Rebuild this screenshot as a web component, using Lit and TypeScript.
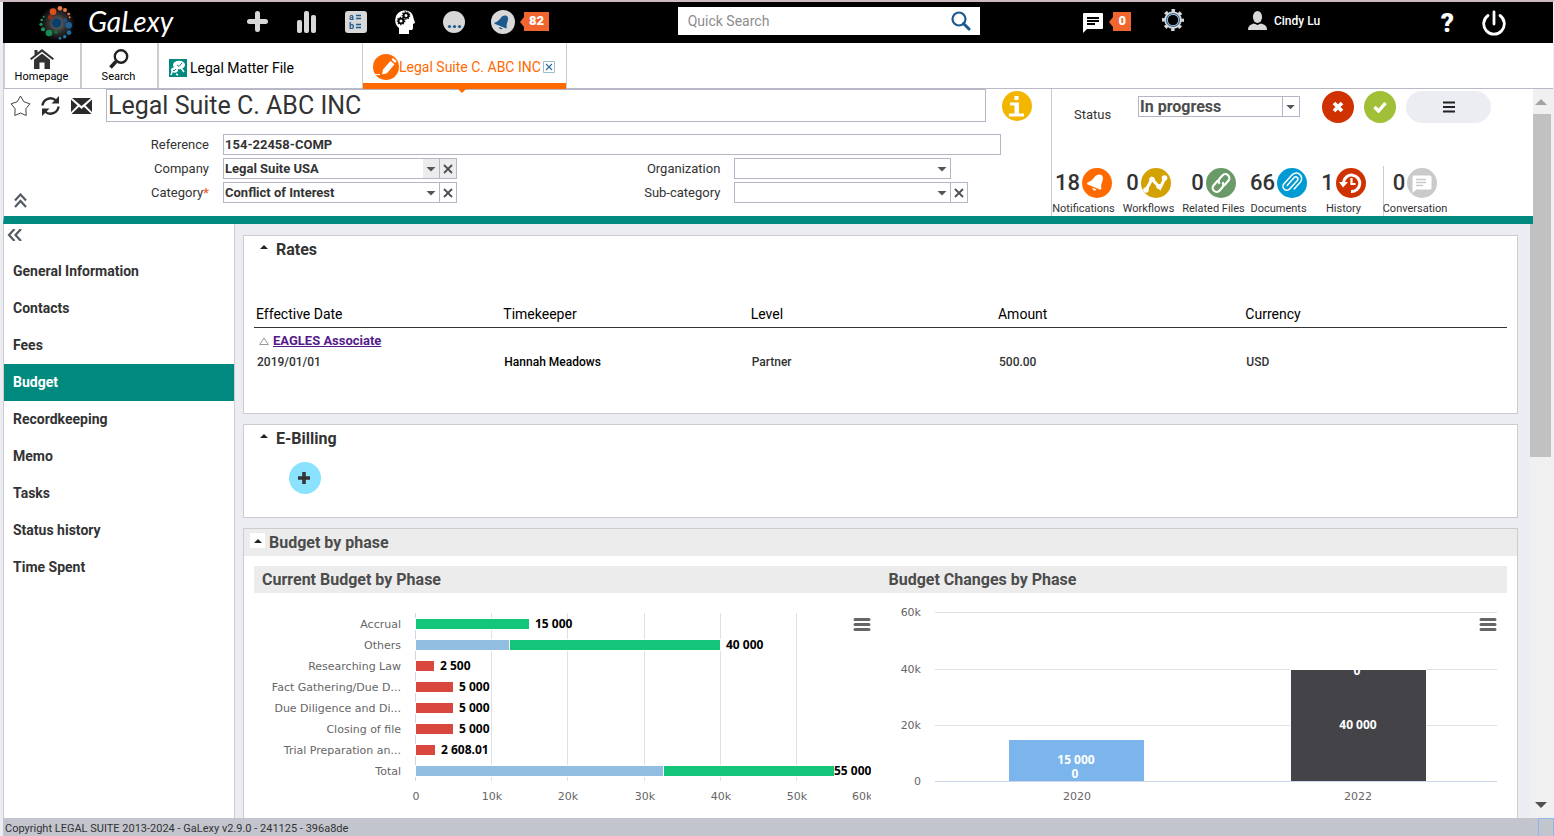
import { LitElement, html, css, svg, nothing } from "lit";
import { customElement, property } from "lit/decorators.js";
import { classMap } from "lit/directives/class-map.js";

const up = svg`<path d="M0 4 4 0l4 4z"/>`;

const SECTIONS = ["General Information", "Contacts", "Fees", "Budget", "Recordkeeping", "Memo", "Tasks", "Status history", "Time Spent"];

const bell = svg`<path d="M19.500 7c-2.500-1.200-5-.5-7 2-1.700 2.200-3.500 4.600-7 5.600-.8.600-.5 1.400.3 1.800l12.200 5c1 .3 1.500-.3 1.300-1.200-.6-3.400.6-5.200 1.300-7.600.8-2.600.3-4.600-1.100-5.600z"/><path d="M10.500 19.800a2.200 2.200 0 0 0 4 1.600z"/>`;

const COUNTERS = [
  { n: 18, label: "Notifications", color: "#ff6a00", icon: svg`<g fill="#fff">${bell}</g>` },
  { n: 0, label: "Workflows", color: "#d3a200", icon: svg`<g fill="#fff"><path d="M5 22 11 11l8 9 5-10" fill="none" stroke="#fff" stroke-width="3"/><circle cx="5" cy="22" r="2.800"/><circle cx="11" cy="11.500" r="2.800"/><circle cx="18" cy="18.500" r="2.600"/><circle cx="23.500" cy="10" r="2.800"/></g>` },
  { n: 0, label: "Related Files", color: "#6a9a67", icon: svg`<g fill="none" stroke="#fff" stroke-width="2.200" transform="rotate(-48 15 15)"><path d="M15 11H8.500a4 4 0 0 0 0 8h4a4 4 0 0 0 4-3.500"/><path d="M15 19h6.500a4 4 0 0 0 0-8h-4a4 4 0 0 0-4 3.500"/></g>` },
  { n: 66, label: "Documents", color: "#009bd2", icon: svg`<path d="M10 13h10.500a2 2 0 0 1 0 4.200H9a3.800 3.800 0 0 1 0-7.600h11.500a5.500 5.500 0 0 1 1 11H12" fill="none" stroke="#fff" stroke-width="1.500" stroke-linecap="round" transform="rotate(-48 15 15)"/>` },
  { n: 1, label: "History", color: "#cf3200", icon: svg`<g fill="none" stroke="#fff" stroke-width="3"><path d="M7.500 14a8.200 8.200 0 1 1 7.500 9.500"/><path d="M15.500 10v6h4" stroke-width="2.200"/></g><path d="M3 14h9l-5 5.500z" fill="#fff"/>` },
  { n: 0, label: "Conversation", color: "#cacaca", icon: svg`<path d="M7 7.500h16a1.500 1.500 0 0 1 1.500 1.500v11a1.500 1.500 0 0 1-1.500 1.500H9.500l-4 3.500V9A1.500 1.500 0 0 1 7 7.500z" fill="#fff"/><path d="M9 11.500h10M9 14.500h10M9 17.500h7" stroke="#cacaca" stroke-width="1.500"/>` },
];

const DOTS: [number, number, number, string][] = [
  [159, 35, 10, "#d9501e"], [180, 25, 7, "#ee7846"], [195, 30, 6, "#ee7846"], [206, 42, 4, "#ee7846"], [209, 52, 3, "#ee7846"],
  [151, 52, 7, "#96291b"], [170, 69, 14, "#07406f"], [195, 61, 6, "#1d558a"], [206, 76, 10, "#1d5f96"], [207, 98, 7, "#1d6b9e"],
  [194, 110, 5, "#2a7ab0"], [180, 115, 4, "#2a7ab0"], [168, 96, 6, "#14693f"], [147, 99, 10, "#178a4f"], [129, 88, 6, "#1d965a"],
  [123, 73, 5, "#1d965a"], [125, 60, 4, "#1d965a"], [131, 50, 3, "#1d965a"],
];

interface Phase { name: string; parts: [number, string][]; label: string }
const GREEN = "#13c579", BLUE = "#91bde0", RED = "#d9473f";
const PHASES: Phase[] = [
  { name: "Accrual", parts: [[15000, GREEN]], label: "15 000" },
  { name: "Others", parts: [[12400, BLUE], [27600, GREEN]], label: "40 000" },
  { name: "Researching Law", parts: [[2500, RED]], label: "2 500" },
  { name: "Fact Gathering/Due D...", parts: [[5000, RED]], label: "5 000" },
  { name: "Due Diligence and Di...", parts: [[5000, RED]], label: "5 000" },
  { name: "Closing of file", parts: [[5000, RED]], label: "5 000" },
  { name: "Trial Preparation an...", parts: [[2608.01, RED]], label: "2 608.01" },
  { name: "Total", parts: [[32600, BLUE], [22400, GREEN]], label: "55 000" },
];

@customElement("picker-field")
class PickerField extends LitElement {
  @property() value = "";
  @property() label = "";
  @property({ type: Boolean }) clearable = false;
  @property({ type: Boolean }) shaded = false;
  static styles = css`
    :host { display: flex; height: 21px; }
    .box { position: relative; flex: 0 0 217px; min-width: 0; }
    select { box-sizing: border-box; width: 100%; height: 21px; margin: 0; padding: 0 17px 0 1px; appearance: none; border: 1px solid #b4b5c6; border-radius: 0; background: #fff; color: #333; font: bold 13px/19px Roboto, sans-serif; opacity: 1; }
    .arrow { position: absolute; right: 1px; top: 1px; width: 16px; height: 19px; pointer-events: none; }
    button { box-sizing: border-box; width: 18px; height: 21px; margin-left: -1px; padding: 0; border: 1px solid #b4b5c6; background: #fff; display: grid; place-items: center; position: relative; }
    .shaded .arrow, button.shaded { background: #ececec; }
    svg { display: block; }
  `;
  render() {
    return html`<span class=${classMap({ box: true, shaded: this.shaded })}>
        <select aria-label=${this.label}><option>${this.value}</option></select>
        <svg class="arrow" viewBox="0 0 16 19"><path d="M3.500 8h9L8 12.500z" fill="#555"/></svg>
      </span>
      ${this.clearable ? html`<button class=${classMap({ shaded: this.shaded })} aria-label="Clear ${this.label}"><svg width="10" height="10" viewBox="0 0 10 10"><path d="M1 1l8 8M9 1 1 9" stroke="#4b4e55" stroke-width="1.800"/></svg></button>` : nothing}`;
  }
}

@customElement("phase-chart")
class PhaseChart extends LitElement {
  static styles = css`
    :host { display: block; }
    svg { display: block; }
    .axis { font: 11px "DejaVu Sans", sans-serif; fill: #666; }
    .value { font: bold 12px "Noto Sans", sans-serif; fill: #000; }
  `;
  render() {
    const x0 = 162, top = 20, row = 21;
    const px = (v: number) => Math.round((v / 10000) * 76.2);
    return html`<svg width="617" height="225" role="img" aria-label="Current Budget by Phase">
      ${[1, 2, 3, 4, 5].map(k => svg`<path d="M${x0 + px(k * 10000) - 0.5} ${top}v168" stroke="#e0e0e0"/>`)}
      <path d="M${x0 - 0.5} ${top}v168" stroke="#ccd6eb"/>
      ${PHASES.map((p, i) => {
        let at = 0;
        const y = top + i * row + 6;
        const bars = p.parts.map(([v, color]) => {
          const a = px(at);
          at += v;
          return svg`<rect x=${x0 + a - 0.5} y=${y - 0.5} width=${px(at) - a} height="11" fill=${color} stroke="#fff"/>`;
        });
        const end = x0 + px(at);
        return svg`${bars}<text class="axis" text-anchor="end" x="147" y=${y + 9}>${p.name}</text>
          <text class="value" x=${p.name === "Total" ? end - 1 : end + 5} y=${y + 9}>${p.label}</text>`;
      })}
      ${[0, 1, 2, 3, 4, 5].map(k => svg`<text class="axis" text-anchor="middle" x=${x0 + px(k * 10000)} y="207">${k ? k + "0k" : "0"}</text>`)}
      <text class="axis" x="598" y="207">60k</text>
      <path d="M601 26.500h14M601 31.500h14M601 36.500h14" stroke="#666" stroke-width="3" stroke-linecap="round"/>
    </svg>`;
  }
}

@customElement("changes-chart")
class ChangesChart extends LitElement {
  static styles = css`
    :host { display: block; }
    svg { display: block; }
    .axis { font: 11px "DejaVu Sans", sans-serif; fill: #666; }
    .value { font: bold 12px "Noto Sans", sans-serif; fill: #fff; text-anchor: middle; }
  `;
  render() {
    return html`<svg width="616" height="225" role="img" aria-label="Budget Changes by Phase">
      <clipPath id="plot"><path d="M0 77h616v148H0z"/></clipPath>
      ${["60k", "40k", "20k", "0"].map((t, i) => {
        const y = [19, 76, 132, 188][i];
        return svg`<path d="M54 ${y + 0.5}h562" stroke=${i === 3 ? "#ccd6eb" : "#e0e0e0"}/><text class="axis" text-anchor="end" x="40" y=${y + 4}>${t}</text>`;
      })}
      <rect x="127.500" y="146.500" width="136" height="42" fill="#7cb5ec" stroke="#fff"/>
      <rect x="409.500" y="76.500" width="136" height="112" fill="#434348" stroke="#fff"/>
      <path d="M54 188.500h562" stroke="#ccd6eb"/>
      <text class="value" x="195" y="171">15 000</text><text class="value" x="194" y="185">0</text>
      <text class="value" x="477" y="136">40 000</text><text class="value" x="476" y="82" clip-path="url(#plot)">0</text>
      <text class="axis" text-anchor="middle" x="196" y="207">2020</text>
      <text class="axis" text-anchor="middle" x="477" y="207">2022</text>
      <path d="M600 26.500h14M600 31.500h14M600 36.500h14" stroke="#666" stroke-width="3" stroke-linecap="round"/>
    </svg>`;
  }
}

@customElement("app-root")
class AppRoot extends LitElement {
  static styles = css`
    :host { display: flex; flex-direction: column; height: 100vh; overflow: hidden; box-sizing: border-box; background: #ecedf3; border-top: 2px solid #cdb9c2; color: #333; font: 13px/16px Roboto, sans-serif; }
    * { box-sizing: border-box; }
    svg { display: block; flex: none; }
    button { font: inherit; color: inherit; margin: 0; padding: 0; border: 0; background: none; }
    a { color: inherit; text-decoration: none; }
    h1, h2, h3 { margin: 0; }

    .top { flex: none; display: flex; align-items: center; height: 41px; margin: 0 1px 0 3px; padding-right: 47px; background: #000; color: #fff; }
    .logo { display: flex; align-items: center; gap: 13px; width: 230px; padding-left: 35px; font: italic 28px/36px Lato, sans-serif; }
    .logo span { padding-bottom: 3px; }
    .tool { width: 49px; height: 41px; padding-bottom: 2px; display: grid; place-items: center; }
    .badge { display: flex; align-items: center; padding-bottom: 2px; color: #fff; font-weight: bold; }
    .badge::before { content: ""; border: 5px solid transparent; border-left: 0; border-right: 4px solid #f1652f; }
    .badge b { background: #f1652f; height: 19px; line-height: 18px; padding: 0 5px; }
    .badge.left { margin-left: -7px; }
    .g1 { flex: 129 1 0; }
    .g2 { flex: 104 1 0; }
    .g3 { flex: 121 1 0; }
    .search { display: flex; align-items: center; width: 302px; height: 28px; margin-bottom: 3px; padding: 0 9px 0 10px; background: #fff; }
    .search input { flex: 1; min-width: 0; border: 0; padding: 0; outline: 0; background: none; font: 14px/20px Roboto, sans-serif; color: #333; }
    .search input::placeholder { color: #8c8c8c; opacity: 1; }
    .chat { display: flex; align-items: center; gap: 6px; }
    .gear { margin: 0 0 5px 31px; }
    .user { display: flex; align-items: center; gap: 7px; margin: 0 0 4px 64px; font-size: 12px; font-weight: 500; }
    .help { margin-right: 28px; font: 900 26px/36px Roboto, sans-serif; }

    .tabs { flex: none; display: flex; height: 46px; margin: 0 1px 0 3px; background: #fff; border-left: 2px solid #ccc; border-bottom: 1px solid #b9bac6; color: #000; }
    .nav { width: 77px; border-right: 2px solid #ccc; display: flex; flex-direction: column; align-items: center; padding: 6px 2px 0 0; gap: 1px; font-size: 11px; line-height: 14px; }
    .tab { position: relative; display: flex; align-items: center; width: 203px; padding: 4px 0 0 10px; gap: 3px; font-size: 14px; }
    .tab.active { width: 205px; gap: 0; padding-bottom: 2px; color: #ff6a00; border: solid #ccc; border-width: 0 1px; }
    .tab.active::before { content: ""; position: absolute; left: 0; right: 0; bottom: -1px; height: 6px; background: #ff6a00; }
    .tab.active::after { content: ""; position: absolute; left: 95px; bottom: -5px; border: 4px solid transparent; border-bottom: 0; border-top-color: #ff6a00; z-index: 2; }
    .tab .close { margin-left: 2px; }

    .frame { flex: 1; min-height: 0; display: flex; margin: 0 1px 0 3px; }
    .content { flex: 1; min-width: 0; display: flex; flex-direction: column; }
    .scroll { flex: none; width: 23px; background: #f0f0f0; display: flex; flex-direction: column; align-items: center; padding: 10px 2px 10px 0; }
    .thumb { flex: none; width: 21px; height: 343px; margin-top: 9px; background: #c1c1c1; }
    .scroll .end { margin-top: auto; }

    .record { position: relative; flex: none; display: flex; height: 135px; margin-right: -3px; border-left: 1px solid #ccc; border-bottom: 8px solid #00897e; background: #fff; }
    .details { flex: 1; min-width: 0; position: relative; }
    .titlebar { display: flex; align-items: center; gap: 9px; height: 33px; padding: 0 19px 0 6px; }
    .titlebar input { flex: 1; min-width: 0; height: 33px; margin-left: 5px; border: 1px solid #b4b5c6; padding: 0 1px; font: 25px/31px Roboto, sans-serif; color: #333; }
    .info { margin-left: 7px; }
    .fields { display: grid; grid-template-columns: 205px 235fr 249fr 267fr; column-gap: 14px; row-gap: 3px; padding: 12px 50px 0 0; align-items: center; }
    .fields label { text-align: right; }
    .fields label i { color: #f1652f; font-weight: bold; font-style: normal; }
    .ref { grid-column: 2 / 5; height: 21px; border: 1px solid #b4b5c6; padding: 0 1px; font: bold 13px/19px Roboto, sans-serif; color: #333; }
    .collapse { position: absolute; left: 10px; bottom: 8px; }
    .side { flex: none; width: 482px; border-left: 1px solid #ccc; display: flex; flex-direction: column; justify-content: space-between; }
    .status { display: flex; align-items: center; padding: 0 0 0 22px; }
    .status label { width: 64px; padding-top: 18px; }
    .pick { position: relative; width: 162px; margin-right: 22px; }
    .pick select { display: block; width: 100%; height: 21px; margin: 0; padding: 0 20px 0 1px; appearance: none; border: 1px solid #b4b5c6; border-radius: 0; background: #fff; font: bold 16px/19px Roboto, sans-serif; color: #4c4c4c; }
    .pick svg { position: absolute; right: 1px; top: 1px; border-left: 1px solid #b4b5c6; pointer-events: none; }
    .round { width: 32px; height: 32px; border-radius: 16px; display: grid; place-items: center; margin: 1px 10px 0 0; }
    .cancel { background: #cf3200; }
    .ok { background: #a2c037; }
    .round.menu { width: 85px; background: #ecedf3; margin-right: 0; }
    .counters { display: flex; height: 50px; }
    .counter { width: 65px; display: flex; flex-direction: column; align-items: center; font-size: 11px; line-height: 14px; white-space: nowrap; padding: 2px 2px 0 0; gap: 4px; }
    .counter:last-child { margin-left: 6px; border-left: 1px solid #ccc; }
    .counter span { display: flex; align-items: center; gap: 2px; font-size: 22px; line-height: 28px; font-weight: 500; color: #333; }

    .body { flex: 1; min-height: 0; display: flex; }
    .sidebar { flex: none; width: 232px; background: #fff; border: solid #ccc; border-width: 0 1px; padding-top: 5px; }
    .sidebar a { display: block; height: 37px; padding: 0 9px; font: bold 14px/37px Roboto, sans-serif; }
    .sidebar a.current { background: #00897e; color: #fff; }
    .fold { display: block; height: 24px; padding: 0 0 12px 3px; }
    .panels { flex: 1; min-width: 0; overflow: hidden; padding: 11px 12px 0 8px; display: flex; flex-direction: column; gap: 10px; }
    .panel { flex: none; background: #fff; border: 1px solid #ccc; padding: 0 10px; }
    .panel h2 { display: flex; align-items: center; height: 27px; font: bold 16px/20px Roboto, sans-serif; gap: 8px; padding-left: 6px; }
    .panel h2 button svg { margin-bottom: 5px; }
    .rates { height: 179px; }
    .billing { height: 94px; }
    table { width: 100%; margin-top: 36px; table-layout: fixed; border-collapse: collapse; }
    col { width: 19.74%; }
    col:last-child { width: auto; }
    th { text-align: left; font-weight: normal; font-size: 14px; height: 28px; padding: 2px 2px 0; color: #000; border-bottom: 1px solid #333; }
    td { height: 21px; padding: 0 3px; font-size: 12px; font-weight: 500; }
    td.group { padding: 4px 5px 0; height: 24px; font-size: 13px; }
    td.group div { display: flex; align-items: center; gap: 4px; }
    td a { color: #551a8b; font-weight: bold; text-decoration: underline; }
    td.person { color: #000; }
    .add { width: 32px; height: 32px; border-radius: 16px; background: #8ae2ff; display: grid; place-items: center; margin: 10px 35px; padding-right: 2px; }
    .budget { height: 400px; }
    .panel.budget h2 { background: #ececec; margin: 0 -10px; color: #4c4c4c; gap: 4px; }
    .panel.budget h2 button { width: 15px; height: 15px; background: #fff; display: grid; place-items: center; margin-bottom: 4px; }
    .panel.budget h2 button svg { margin: 0; }
    .charts { display: grid; grid-template-columns: 1fr 1fr; margin-top: 10px; }
    .charts h3 { height: 27px; padding-left: 8px; background: #ececec; color: #4c4c4c; font: bold 16px/27px Roboto, sans-serif; }
    footer { flex: none; display: flex; justify-content: space-between; height: 18px; margin: 0 0 0 3px; background: #c2c5ce; padding-left: 2px; font-size: 11px; line-height: 22px; }
    .grip { width: 16px; border: solid #8fb6ea; border-width: 1px 1px 0; }
  `;

  render() {
    const caret = html`<button aria-label="Collapse"><svg width="8" height="4" viewBox="0 0 8 4" fill="#222">${up}</svg></button>`;
    return html`
      <header class="top">
        <div class="logo">
          <svg width="37" height="39" viewBox="114 9 111 117"><defs><radialGradient id="glow"><stop offset="0" stop-color="#777"/><stop offset=".5" stop-color="#333"/><stop offset="1" stop-color="#000"/></radialGradient></defs><circle cx="172" cy="70" r="54" fill="url(#glow)"/>${DOTS.map(([x, y, r, c]) => svg`<circle cx=${x} cy=${y} r=${r} fill=${c}/>`)}</svg>
          <span>GaLexy</span>
        </div>
        <button class="tool" aria-label="Add"><svg width="21" height="21" viewBox="0 0 21 21"><path d="M10.500 2.500v16M2.500 10.500h16" stroke="#d8d8d8" stroke-width="5" stroke-linecap="round"/></svg></button>
        <button class="tool" aria-label="Statistics"><svg width="20" height="22" viewBox="0 0 20 22" fill="#d8d8d8"><rect x="0" y="9" width="5" height="13" rx="2"/><rect x="7" width="5" height="22" rx="2"/><rect x="14" y="4" width="5" height="18" rx="2"/></svg></button>
        <button class="tool" aria-label="Glossary"><svg width="22" height="22" viewBox="0 0 22 22"><rect width="22" height="22" rx="3" fill="#d8d8d8"/><g font-family="Roboto" font-size="9" font-weight="bold" fill="#1c5a8d"><text x="4" y="9">a</text><text x="4" y="18">b</text></g><path d="M11 4.500h5M11 7.500h5M11 13.500h5M11 16.500h5" stroke="#1c5a8d" stroke-width="1.300"/></svg></button>
        <button class="tool" aria-label="Knowledge"><svg width="22" height="24" viewBox="0 0 22 24"><path d="M5 24v-6C2 15.500.5 12 1.500 8 2.500 3 6.500.5 11 .5c5 0 8 3 8.500 7.500l1.500 5-2 1v4c0 1.500-1 2-2 2h-2v4z" fill="#fff"/><g fill="none" stroke="#000" stroke-width="1.800"><circle cx="7" cy="11" r="2.400"/><circle cx="12" cy="5.500" r="2.400"/></g><g fill="none" stroke="#000" stroke-width="1.200" stroke-dasharray="1.300 1.300"><circle cx="7" cy="11" r="3.700"/><circle cx="12" cy="5.500" r="3.700"/></g></svg></button>
        <button class="tool" aria-label="More"><svg width="22" height="22" viewBox="0 0 22 22"><circle cx="11" cy="11" r="11" fill="#d8d8d8"/><g fill="#1c5a8d"><circle cx="6.500" cy="15.500" r="1.600"/><circle cx="11.500" cy="15.500" r="1.600"/><circle cx="16.500" cy="15.500" r="1.600"/></g></svg></button>
        <button class="tool" aria-label="Alerts"><svg width="24" height="24" viewBox="1 0 28 28"><circle cx="15" cy="14" r="14" fill="#d8d8d8"/><g fill="#1c5a8d">${bell}</g></svg></button>
        <span class="badge left"><b>82</b></span>
        <span class="g1"></span>
        <form class="search" role="search"><input aria-label="Quick Search" placeholder="Quick Search"><svg width="20" height="20" viewBox="0 0 20 20" fill="none" stroke="#1c5a8d"><circle cx="8" cy="8" r="6.500" stroke-width="2.200"/><path d="m12.500 12.500 5.500 5.500" stroke-width="3" stroke-linecap="round"/></svg></form>
        <span class="g2"></span>
        <button class="chat" aria-label="Messages"><svg width="20" height="20" viewBox="0 0 20 20"><path d="M1 0h18a1 1 0 0 1 1 1v14a1 1 0 0 1-1 1H4l-4 4V1a1 1 0 0 1 1-1z" fill="#fff"/><path d="M4 5h12M4 8h12M4 11h8" stroke="#000" stroke-width="2"/></svg><span class="badge"><b>0</b></span></button>
        <button class="gear" aria-label="Settings"><svg width="22" height="22" viewBox="0 0 22 22" fill="none"><circle cx="11" cy="11" r="7" stroke="#d8d8d8" stroke-width="3.500"/><circle cx="11" cy="11" r="9.500" stroke="#d8d8d8" stroke-width="3" stroke-dasharray="3.500 3.960" stroke-dashoffset="1.750"/><circle cx="11" cy="11" r="6.500" stroke="#2a6ba0" stroke-width="1.200"/></svg></button>
        <button class="user"><svg width="19" height="20" viewBox="0 0 19 20" fill="#d8d8d8"><ellipse cx="9.500" cy="6" rx="4.600" ry="6"/><path d="M0 19c0-4 2-5.500 6-6.500l3.500 1.500 3.500-1.500c4 1 6 2.500 6 6.500z"/></svg>Cindy Lu</button>
        <span class="g3"></span>
        <button class="help" aria-label="Help">?</button>
        <button aria-label="Log out"><svg width="24" height="26" viewBox="0 0 24 26" fill="none" stroke="#fff" stroke-width="2.800" stroke-linecap="round"><path d="M12 2v12M6 5.500a10.300 10.300 0 1 0 12 0"/></svg></button>
      </header>

      <nav class="tabs">
        <a class="nav" href="#"><svg width="24" height="20" viewBox="0 0 24 20" fill="#333"><path d="M12 0 24 9.500l-1.300 1.500L12 2.800 1.300 11 0 9.500 4.500 6V1h3v2.600z"/><path d="m12 4.500 8 6.200V20h-5.500v-6.500h-5V20H4v-9.300z"/></svg>Homepage</a>
        <a class="nav" href="#"><svg width="20" height="20" viewBox="0 0 20 20" fill="none" stroke="#222"><circle cx="12" cy="7.500" r="6.200" stroke-width="2.400"/><path d="m7 12.500-5.500 6" stroke-width="3.600"/></svg>Search</a>
        <a class="tab" href="#"><svg width="18" height="18" viewBox="0 0 18 18"><path d="M0 0h18v18H0z" fill="#00897e"/><ellipse cx="10" cy="6" rx="6" ry="4.200" fill="#fff"/><ellipse cx="5.500" cy="11" rx="3.500" ry="2.800" fill="#fff"/><path d="m12 9 3 4M3 13l-1 3M7 15l2 1" stroke="#fff" stroke-width="1.500"/><path d="m8 6 2 1.500L13 4M4 11l1 1 2-2" stroke="#00897e" fill="none"/></svg>Legal Matter File</a>
        <a class="tab active" href="#"><svg width="26" height="26" viewBox="0 0 26 26"><circle cx="13" cy="13" r="13" fill="#ff6a00"/><path d="m9 20.500 1-5L17.500 7l4 3.200-7.500 9zM18.500 5.800 20 4l3.500 3-1.200 2z" fill="#fff"/><path d="M2 20.500h5" stroke="#fff"/></svg>Legal Suite C. ABC INC<svg class="close" width="12" height="12" viewBox="0 0 12 12" fill="none"><path d="M.5.5h11v11H.5z" stroke="#9cbcd4"/><path d="m3 3 6 6M9 3 3 9" stroke="#2f6f9f" stroke-width="1.200"/></svg></a>
      </nav>

      <div class="frame">
        <div class="content">
          <section class="record">
            <div class="details">
              <div class="titlebar">
                <button aria-label="Favourite"><svg width="21" height="22" viewBox="0 0 21 22"><path d="m10.500 1 3.400 5.800 6 2-4 5 .3 6.700-5.700-2.500-5.700 2.500.3-6.700-4-5 6-2z" fill="none" stroke="#444"/></svg></button>
                <button aria-label="Refresh"><svg width="22" height="20" viewBox="0 0 22 20"><g fill="none" stroke="#2b2b2b" stroke-width="2.400"><path d="M2.500 9.500A8 8 0 0 1 16 4.500M18.500 10.500A8 8 0 0 1 5 15.500"/></g><path d="M19 0v7.500h-7.500zM2 20v-7.500h7.500z" fill="#2b2b2b"/></svg></button>
                <button aria-label="Send by mail"><svg width="21" height="16" viewBox="0 0 21 16" fill="#2b2b2b"><path d="M1 0h19l-9.500 8zM0 1.500 6.500 7.500 0 14zM21 1.500 14.500 7.500 21 14zM8 8.800l2.500 2.200L13 8.800 20.500 16H.5z"/></svg></button>
                <input aria-label="Title" value="Legal Suite C. ABC INC">
                <button class="info" aria-label="Information"><svg width="30" height="30" viewBox="0 0 30 30"><circle cx="15" cy="15" r="15" fill="#f3b600"/><path d="M12.500 5h4v4h-4zM8 11.500h9v11h5v3H7v-3h5.500v-8H8z" fill="#fff"/></svg></button>
              </div>
              <div class="fields">
                <label for="ref">Reference</label><input class="ref" id="ref" value="154-22458-COMP">
                <label for="company">Company</label><picker-field id="company" label="Company" value="Legal Suite USA" clearable shaded></picker-field>
                <label for="org">Organization</label><picker-field id="org" label="Organization"></picker-field>
                <label for="category">Category<i>*</i></label><picker-field id="category" label="Category" value="Conflict of Interest" clearable></picker-field>
                <label for="sub">Sub-category</label><picker-field id="sub" label="Sub-category" clearable></picker-field>
              </div>
              <button class="collapse" aria-label="Collapse header"><svg width="13" height="15" viewBox="0 0 13 15" fill="none" stroke="#555b63" stroke-width="2.200"><path d="m1 7.500 5.500-6 5.500 6M1 14l5.500-6 5.500 6"/></svg></button>
            </div>
            <div class="side">
              <div class="status">
                <label for="status">Status</label>
                <span class="pick"><select id="status"><option>In progress</option></select><svg width="17" height="19" viewBox="0 0 17 19"><path d="M3.500 8h9L8 12.500z" fill="#555"/></svg></span>
                <button class="round cancel" aria-label="Cancel"><svg width="12" height="12" viewBox="0 0 12 12"><path d="m2 2 8 8M10 2l-8 8" stroke="#fff" stroke-width="3.800"/></svg></button>
                <button class="round ok" aria-label="Validate"><svg width="14" height="12" viewBox="0 0 14 12"><path d="m1.500 6 4 4 7-8" fill="none" stroke="#fff" stroke-width="3.400"/></svg></button>
                <button class="round menu" aria-label="Menu"><svg width="12" height="12" viewBox="0 0 12 12"><path d="M0 1.500h12M0 6h12M0 10.500h12" stroke="#222" stroke-width="2.200"/></svg></button>
              </div>
              <div class="counters">
                ${COUNTERS.map(c => html`<a class="counter" href="#"><span>${c.n}<svg width="30" height="30" viewBox="0 0 30 30"><circle cx="15" cy="15" r="15" fill=${c.color}/>${c.icon}</svg></span>${c.label}</a>`)}
              </div>
            </div>
          </section>
          <div class="body">
            <nav class="sidebar">
              <button class="fold" aria-label="Collapse menu"><svg width="15" height="12" viewBox="0 0 15 12" fill="none" stroke="#555b63" stroke-width="2.200"><path d="M7.500 0 2 6l5.500 6M14 0 8.500 6l5.500 6"/></svg></button>
              ${SECTIONS.map(s => html`<a href="#" class=${classMap({ current: s === "Budget" })}>${s}</a>`)}
            </nav>
            <main class="panels">
              <section class="panel rates">
                <h2>${caret}Rates</h2>
                <table>
                  <colgroup><col><col><col><col><col></colgroup>
                  <thead><tr><th>Effective Date</th><th>Timekeeper</th><th>Level</th><th>Amount</th><th>Currency</th></tr></thead>
                  <tbody>
                    <tr><td class="group" colspan="5"><div><svg width="10" height="8" viewBox="0 0 10 8"><path d="m5 1 4.300 6.500H.7z" fill="none" stroke="#999"/></svg><a href="#">EAGLES Associate</a></div></td></tr>
                    <tr><td>2019/01/01</td><td class="person">Hannah Meadows</td><td>Partner</td><td>500.00</td><td>USD</td></tr>
                  </tbody>
                </table>
              </section>
              <section class="panel billing">
                <h2>${caret}E-Billing</h2>
                <button class="add" aria-label="Add e-billing"><svg width="12" height="12" viewBox="0 0 12 12"><path d="M6 0v12M0 6h12" stroke="#333" stroke-width="3.500"/></svg></button>
              </section>
              <section class="panel budget">
                <h2>${caret}Budget by phase</h2>
                <div class="charts">
                  <div><h3>Current Budget by Phase</h3><phase-chart></phase-chart></div>
                  <div><h3>Budget Changes by Phase</h3><changes-chart></changes-chart></div>
                </div>
              </section>
            </main>
          </div>
        </div>
        <div class="scroll" aria-hidden="true">
          <svg width="12" height="6" viewBox="0 0 12 6"><path d="M0 6 6 0l6 6z" fill="#a3a3a3"/></svg>
          <div class="thumb"></div>
          <svg class="end" width="12" height="6" viewBox="0 0 12 6"><path d="M0 0h12L6 6z" fill="#505050"/></svg>
        </div>
      </div>
      <footer><span>Copyright LEGAL SUITE 2013-2024 - GaLexy v2.9.0 - 241125 - 396a8de</span><span class="grip"></span></footer>
    `;
  }
}
